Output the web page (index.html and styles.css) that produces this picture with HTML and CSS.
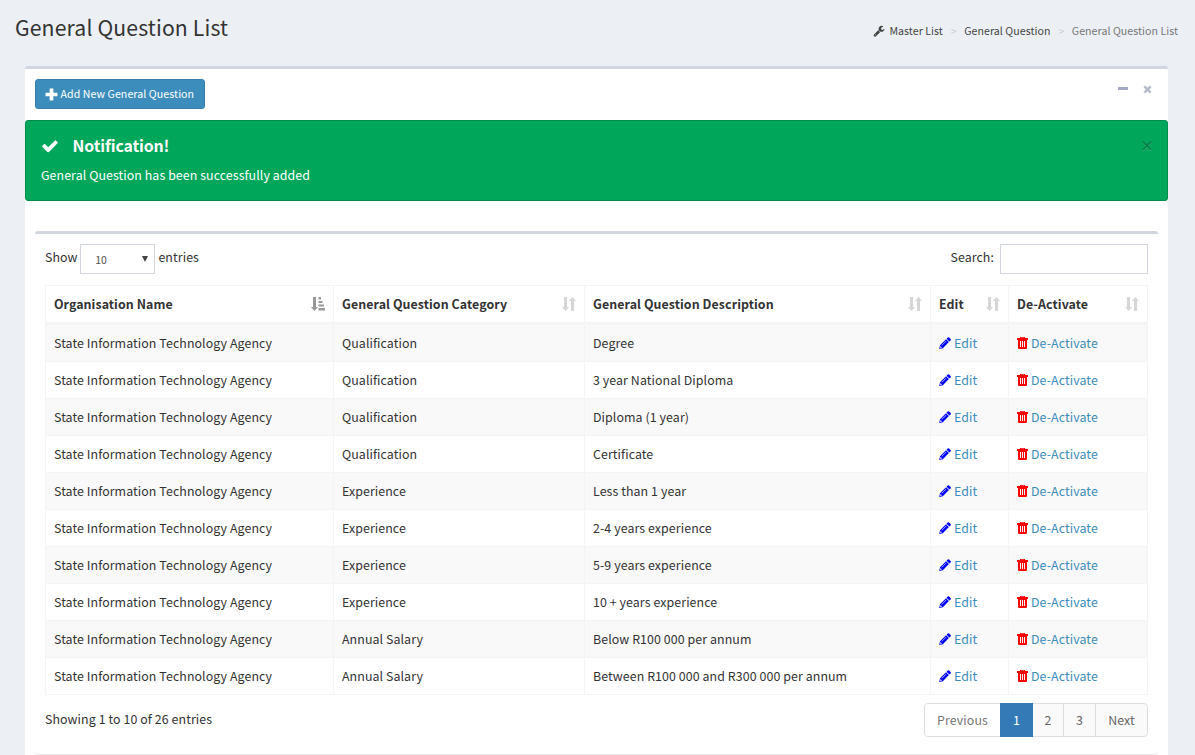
FILE: index.html
```
<!DOCTYPE html>
<html lang="en">
<head>
<meta charset="utf-8">
<title>General Question List</title>
<link rel="stylesheet" href="styles.css">
</head>
<body>
<svg class="sprite" aria-hidden="true">
  <symbol id="plus" viewBox="0 0 12 12"><path d="M4.300 0.500h3.400v3.800h3.800v3.400h-3.800v3.800h-3.400v-3.800h-3.800v-3.400h3.800z"/></symbol>
  <symbol id="check" viewBox="0 0 1792 1792"><path d="M1671 566q0 40-28 68l-724 724-136 136q-28 28-68 28t-68-28l-136-136-362-362q-28-28-28-68t28-68l136-136q28-28 68-28t68 28l294 295 656-657q28-28 68-28t68 28l136 136q28 28 28 68z"/></symbol>
  <symbol id="wrench" viewBox="0 0 1792 1792"><path d="M448 1472q0-26-19-45t-45-19-45 19-19 45 19 45 45 19 45-19 19-45zm644-420l-682 682q-37 37-90 37-52 0-91-37l-106-108q-38-36-38-90 0-53 38-91l681-681q39 98 114.500 173.500t173.500 114.500zm634-435q0 39-23 106-47 134-164.500 217.500t-258.500 83.500q-185 0-316.500-131.500t-131.500-316.500 131.500-316.500 316.500-131.500q58 0 121.500 16.500t107.500 46.500q16 11 16 28t-16 28l-293 169v224l193 107q5-3 79-48.500t135.500-81 70.500-35.500q15 0 23.500 10t8.500 25z"/></symbol>
  <symbol id="times" viewBox="0 0 10 10"><path d="M2.500 0.500l2.500 2.500 2.500-2.500 2 2-2.500 2.500 2.500 2.500-2 2-2.500-2.500-2.500 2.500-2-2 2.500-2.500-2.500-2.500z"/></symbol>
  <symbol id="pencil" viewBox="0 0 12 12"><path fill-rule="evenodd" d="M8.700 0.500q.7-.6 1.400 0l1.500 1.500q.6.700 0 1.400l-1.200 1.200-2.900-2.900zM7 2.200l2.900 2.900-6.100 6.100L.2 12l.8-3.800zM1.500 9l-.4 1.900 1.900-.4zM7 3.700l-4.500 4.500.4.400 4.500-4.500z"/></symbol>
  <symbol id="trash" viewBox="0 0 11 12"><path fill-rule="evenodd" d="M3 1V0h5v1h3v2H0V1zM4 .7V1h3V.7zM1 3h9v8q0 1-1 1H2q-1 0-1-1zM3 4v6h1V4zM5 4v6h1V4zM7 4v6h1V4z"/></symbol>
  <symbol id="sort" viewBox="0 0 14 14"><path d="M2 0h3v10h2l-3.500 4-3.500-4h2zM9 14h3V4h2L10.500 0 7 4h2z"/></symbol>
  <symbol id="sortasc" viewBox="0 0 14 14"><path d="M2 0h3v10h2l-3.500 4-3.500-4h2zM7.500 0H10v2.500H7.500zM7.500 4h4v2h-4zM7.500 7.500H13v2H7.500zM7.500 11H14v2.500H7.500z"/></symbol>
</svg>
<header class="page-header">
  <h1>General Question List</h1>
  <nav class="crumbs"><svg class="wrench"><use href="#wrench"/></svg><span>Master List</span><i>&gt;</i><span>General Question</span><i>&gt;</i><span class="current">General Question List</span></nav>
</header>
<main class="box">
  <div class="box-header">
    <button class="add"><svg><use href="#plus"/></svg>Add New General Question</button>
    <div class="tools"><b class="minus"></b><svg><use href="#times"/></svg></div>
  </div>
  <section class="alert">
    <div class="alert-head"><svg><use href="#check"/></svg><h4>Notification!</h4><span class="close">×</span></div>
    <p>General Question has been successfully added</p>
  </section>
  <section class="inner">
    <div class="controls">
      <div class="length"><span>Show</span><div class="select"><span>10</span><b></b></div><span>entries</span></div>
      <label class="search"><span>Search:</span><input type="text"></label>
    </div>
    <table>
      <colgroup><col class="c1"><col class="c2"><col class="c3"><col class="c4"><col class="c5"></colgroup>
      <thead><tr>
        <th><div><span>Organisation Name</span><svg class="asc"><use href="#sortasc"/></svg></div></th>
        <th><div><span>General Question Category</span><svg><use href="#sort"/></svg></div></th>
        <th><div><span>General Question Description</span><svg><use href="#sort"/></svg></div></th>
        <th><div><span>Edit</span><svg><use href="#sort"/></svg></div></th>
        <th><div><span>De-Activate</span><svg><use href="#sort"/></svg></div></th>
      </tr></thead>
      <tbody id="rows"></tbody>
    </table>
    <div class="footer">
      <span>Showing 1 to 10 of 26 entries</span>
      <div class="pages"><a class="prev">Previous</a><a class="active">1</a><a class="p2">2</a><a class="p3">3</a><a class="next">Next</a></div>
    </div>
  </section>
</main>
<script src="rows.js"></script>
</body>
</html>
```
FILE: rows.js
```
const rows = [
  ["Qualification", "Degree"],
  ["Qualification", "3 year National Diploma"],
  ["Qualification", "Diploma (1 year)"],
  ["Qualification", "Certificate"],
  ["Experience", "Less than 1 year"],
  ["Experience", "2-4 years experience"],
  ["Experience", "5-9 years experience"],
  ["Experience", "10 + years experience"],
  ["Annual Salary", "Below R100 000 per annum"],
  ["Annual Salary", "Between R100 000 and R300 000 per annum"]
];
document.getElementById("rows").innerHTML = rows.map(([category, description]) => `
  <tr><td>State Information Technology Agency</td><td>${category}</td><td>${description}</td>
  <td><a class="action"><svg class="pencil"><use href="#pencil"/></svg><span>Edit</span></a></td>
  <td><a class="action"><svg class="trash"><use href="#trash"/></svg><span>De-Activate</span></a></td></tr>`).join("");
```
FILE: styles.css
```
* { box-sizing: border-box; }
body { margin: 0; height: 755px; overflow: hidden; background: #ecf0f5; color: #333; font: 12.4px/20px "Noto Sans CJK SC", "Open Sans", sans-serif; letter-spacing: .08px; }
svg { display: block; fill: currentColor; flex: none; }
.sprite { position: absolute; width: 0; height: 0; }
h1, h4, p { margin: 0; }
.page-header { height: 66px; padding: 14px 17px 0 15px; display: flex; justify-content: space-between; }
h1 { font-size: 21.2px; font-weight: 400; line-height: 26px; letter-spacing: .14px; }
.crumbs { display: flex; align-items: center; height: 34px; font-size: 10.6px; letter-spacing: .05px; color: #444; }
.crumbs .wrench { width: 12px; height: 12px; margin-right: 4px; }
.crumbs i { font-style: normal; color: #ccc; padding: 0 7.5px 0 8px; }
.crumbs .current { color: #777; }
.box { margin: 0 27px 0 25px; height: 700px; background: #fff; border-top: 3px solid #d2d6de; border-radius: 3px 3px 0 0; }
.box-header { height: 51px; padding: 10px 16px 0 10px; display: flex; justify-content: space-between; }
.add { width: 170px; height: 30px; display: flex; align-items: center; padding: 0 0 0 9px; border: 1px solid #367fa9; border-radius: 3px; background: #3c8dbc; color: #fff; font: inherit; font-size: 10.6px; letter-spacing: .08px; white-space: nowrap; }
.add svg { width: 13px; height: 13px; margin-right: 2.5px; }
.tools { display: flex; align-items: center; height: 20px; gap: 15px; color: #b7bccb; }
.minus { width: 10px; height: 3px; margin-bottom: 2px; background: #a4a9c2; }
.tools svg { width: 9px; height: 9px; }
.alert { height: 81px; border: 1px solid #008d4c; border-radius: 3px; background: #00a65a; color: #fff; padding: 15px; }
.alert-head { display: flex; align-items: center; height: 20px; }
.alert-head svg { width: 18px; height: 18px; }
h4 { font-size: 15.9px; line-height: 20px; font-weight: 700; letter-spacing: -.13px; margin-left: 13.5px; }
.close { margin: -2px -2px 0 auto; color: #058149; font: 900 14px/20px "Noto Sans CJK SC", sans-serif; text-shadow: 0 1px 0 #2bb075; }
.alert p { margin-top: 9px; letter-spacing: .07px; }
.inner { margin: 30px 10px 0; height: 523px; border-top: 3px solid #d2d6de; border-radius: 3px; box-shadow: 0 1px 1px rgba(0,0,0,.1); padding: 10px 10px 0; }
.controls { display: flex; justify-content: space-between; height: 41px; }
.length, .search { display: flex; height: 30px; line-height: 27px; }
.select { width: 75px; height: 30px; margin: 0 3.3px 0 2.5px; border: 1px solid #d2d6de; padding: 1px 6px 0 14px; display: flex; align-items: center; justify-content: space-between; color: #555; font-size: 10.6px; }
.select b { border: 3.5px solid transparent; border-top: 6px solid #444; border-bottom: 0; margin-top: -2px; }
.search input { width: 148px; height: 30px; margin: 0 0 0 6px; border: 1px solid #d2d6de; }
table { width: 1103px; table-layout: fixed; border-spacing: 0; border: solid #f4f4f4; border-width: 1px 0 0 1px; }
.c1 { width: 288px; } .c2 { width: 251px; } .c3 { width: 346px; } .c4 { width: 78px; } .c5 { width: 139px; }
th, td { padding: 0 8px; border: solid #f4f4f4; border-width: 0 1px 1px 0; text-align: left; height: 37px; }
th { height: 39px; border-bottom-width: 3px; }
th div { display: flex; justify-content: space-between; align-items: center; height: 20px; }
th svg { width: 14px; height: 14px; color: #d6d6d6; }
th svg.asc { color: #999; }
tbody tr:nth-child(odd) { background: #f9f9f9; }
.action { display: flex; align-items: center; color: #3c8dbc; }
.pencil { width: 12px; height: 12px; margin-right: 3px; color: #00f; }
.trash { width: 11px; height: 12px; margin-right: 3px; color: #f00; }
.footer { display: flex; justify-content: space-between; padding-top: 8px; }
.footer > span { line-height: 33px; }
.pages { display: flex; width: 224px; height: 34px; border: 1px solid #ddd; border-radius: 4px; background: #fafafa; color: #666; line-height: 33px; text-align: center; }
.pages a { border-right: 1px solid #ddd; }
.pages .prev { width: 75px; border: 0; color: #777; background: #fff; border-radius: 4px 0 0 4px; }
.pages .active { width: 33px; height: 34px; margin-top: -1px; line-height: 35px; background: #337ab7; color: #fff; border: 0; }
.pages .p2 { width: 31px; } .pages .p3 { width: 32px; }
.pages .next { flex: 1; border: 0; }
```
